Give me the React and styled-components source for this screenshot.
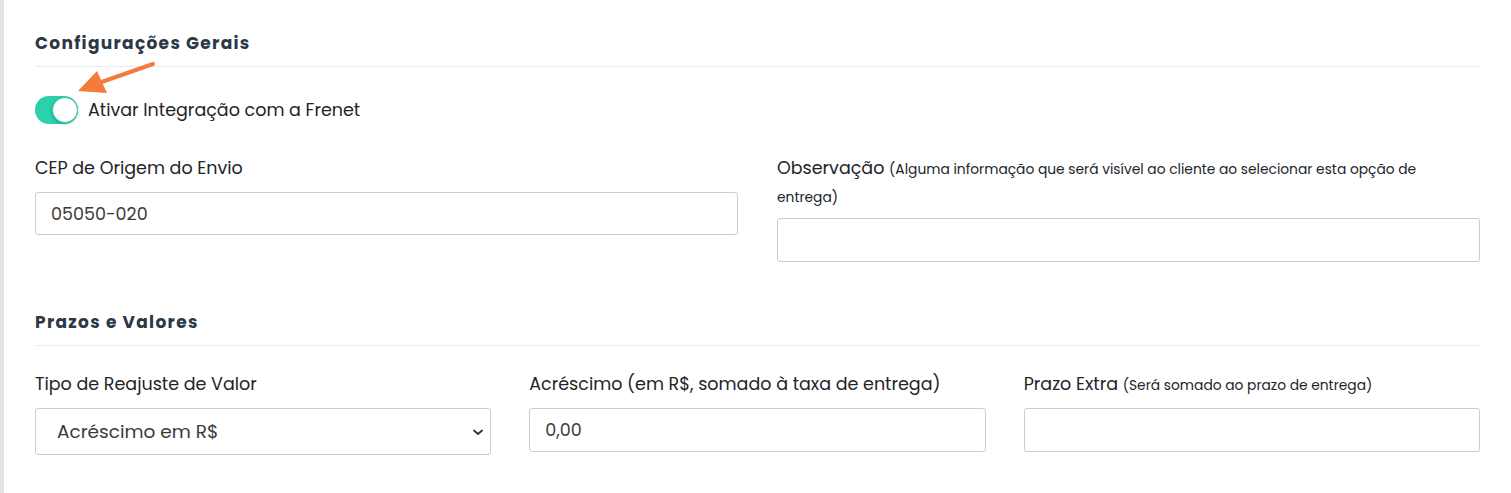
import styled, { createGlobalStyle } from "styled-components";

const GlobalStyle = createGlobalStyle`
  html, body {
    margin: 0;
    padding: 0;
    background: #ffffff;
  }
  body {
    font-family: "Poppins", "Open Sans", "Noto Sans", sans-serif;
    color: #212529;
  }
`;

const Page = styled.div`
  display: flex;
  min-height: 493px;
  width: 1511px;
  box-sizing: border-box;
  border-left: 4px solid #e3e3e8;
`;

const Content = styled.div`
  flex: 1;
  padding: 31px 31px 0 31px;
`;

const Section = styled.section`
  margin-bottom: ${(p) => p.$gap || 0}px;
`;

const SectionTitle = styled.h3`
  margin: 0;
  padding-bottom: 11px;
  border-bottom: 1px solid #ebebeb;
  font-size: 17px;
  line-height: 24px;
  font-weight: 700;
  letter-spacing: 1.3px;
  color: #2c3846;
`;

const ToggleRow = styled.label`
  position: relative;
  display: flex;
  align-items: center;
  gap: 10px;
  margin-top: 29px;
  font-size: 17.5px;
  color: #212529;
`;

const Track = styled.span`
  position: relative;
  width: 43px;
  height: 28px;
  border-radius: 14px;
  background: #2dcfac;
  box-sizing: border-box;
`;

const Knob = styled.span`
  position: absolute;
  top: 1px;
  right: 0;
  width: 26px;
  height: 26px;
  border-radius: 50%;
  background: #ffffff;
  border: 1px solid #2dcfac;
  box-sizing: border-box;
  box-shadow: 0 1px 3px rgba(0, 0, 0, 0.25);
`;

const Arrow = styled.svg`
  position: absolute;
  left: 0;
  top: -40px;
  overflow: visible;
  pointer-events: none;
`;

const Grid = styled.div`
  display: grid;
  grid-template-columns: repeat(${(p) => p.$cols}, 1fr);
  column-gap: ${(p) => p.$colGap}px;
  margin-top: ${(p) => p.$top}px;
  align-items: start;
`;

const Field = styled.div`
  display: flex;
  flex-direction: column;
`;

const Label = styled.div`
  max-width: ${(p) => p.$max || "none"};
  font-size: 17.5px;
  line-height: 28px;
  color: #212529;
  margin-bottom: ${(p) => p.$mb || 10}px;
`;

const Hint = styled.span`
  font-size: 13.8px;
  line-height: 1;
`;

const Input = styled.input`
  height: ${(p) => p.$h || 43}px;
  box-sizing: border-box;
  border: 1px solid #cccccc;
  border-radius: 3px;
  padding: 0 15px;
  font-family: inherit;
  font-size: 17.5px;
  color: #3b3b3b;
  background: #ffffff;
  outline: none;
`;

const SelectWrap = styled.div`
  position: relative;
  display: flex;
  align-items: center;
  height: 47px;
  box-sizing: border-box;
  border: 1px solid #cccccc;
  border-radius: 3px;
  padding: 0 21px;
  font-size: 18.5px;
  color: #3b3b3b;
`;

const Chevron = styled.svg`
  position: absolute;
  right: 6px;
  top: 50%;
  transform: translateY(-50%);
`;

export default function App() {
  return (
    <>
      <GlobalStyle />
      <Page>
        <Content>
          <Section $gap={48}>
            <SectionTitle>Configurações Gerais</SectionTitle>
            <ToggleRow>
              <Track>
                <Knob />
              </Track>
              Ativar Integração com a Frenet
              <Arrow width="130" height="45" viewBox="0 0 130 45">
                <line x1="118" y1="8" x2="58" y2="29" stroke="#f47b3b" strokeWidth="4" strokeLinecap="round" />
                <polygon points="43,35 62,15 72,37" fill="#f47b3b" />
              </Arrow>
            </ToggleRow>
            <Grid $cols={2} $colGap={39} $top={30}>
              <Field>
                <Label>CEP de Origem do Envio</Label>
                <Input defaultValue="05050-020" />
              </Field>
              <Field>
                <Label $max="660px" $mb={8}>
                  Observação{" "}
                  <Hint>
                    (Alguma informação que será visível ao cliente ao selecionar esta opção de entrega)
                  </Hint>
                </Label>
                <Input $h={44} />
              </Field>
            </Grid>
          </Section>
          <Section>
            <SectionTitle>Prazos e Valores</SectionTitle>
            <Grid $cols={3} $colGap={38} $top={24}>
              <Field>
                <Label>Tipo de Reajuste de Valor</Label>
                <SelectWrap>
                  Acréscimo em R$
                  <Chevron width="12" height="12" viewBox="0 0 12 12">
                    <path d="M2 4.5 L6 8 L10 4.5" fill="none" stroke="#333" strokeWidth="1.8" strokeLinecap="round" strokeLinejoin="round" />
                  </Chevron>
                </SelectWrap>
              </Field>
              <Field>
                <Label>Acréscimo (em R$, somado à taxa de entrega)</Label>
                <Input $h={44} defaultValue="0,00" />
              </Field>
              <Field>
                <Label>
                  Prazo Extra <Hint>(Será somado ao prazo de entrega)</Hint>
                </Label>
                <Input $h={44} />
              </Field>
            </Grid>
          </Section>
        </Content>
      </Page>
    </>
  );
}
